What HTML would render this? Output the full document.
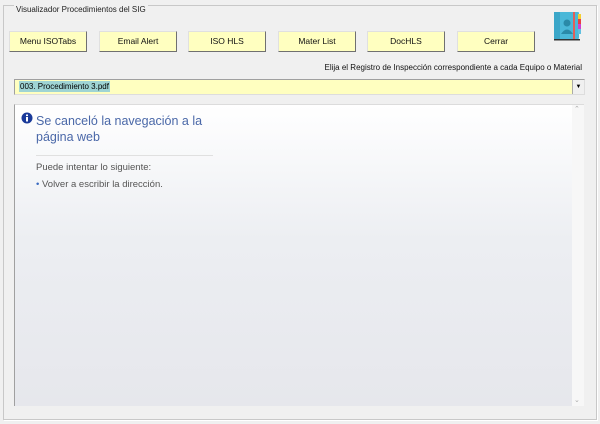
<!DOCTYPE html>
<html><head><style>
body{margin:0;width:600px;height:424px;background:#f0f0f0;font-family:"Liberation Sans",sans-serif;position:relative;overflow:hidden}
.frame{position:absolute;left:3px;top:5px;width:592px;height:413px;border:1px solid #c8c8c8;box-shadow:1px 1px 0 #fff}
.legend{position:absolute;left:10px;top:-1px;font-size:8px;color:#222;background:#f0f0f0;padding:0 2px}
.btn{position:absolute;top:31px;width:76px;height:19px;background:#ffffc0;border:1px solid #e0e0e0;border-right:1px solid #707070;border-bottom:1px solid #707070;font-size:8.5px;text-align:center;line-height:19px;color:#111}
.lbl{position:absolute;right:18px;top:63px;font-size:8px;color:#111}
.combo{position:absolute;left:14px;top:79px;width:569px;height:14px;background:#ffffc0;border:1px solid #a0a0a0;border-bottom-color:#ddd;border-right-color:#ddd}
.combo span{position:absolute;left:4px;top:1px;font-size:8px;background:#9fd4d4;line-height:11px;padding:0 1px}
.arr{position:absolute;right:0;top:0;width:11px;height:14px;background:#f0f0f0;border-left:1px solid #aaa;font-size:6px;text-align:center;line-height:14px}
.web{position:absolute;left:14px;top:104px;width:569px;height:301px;border-left:1px solid #a0a0a0;border-top:1px solid #dcdcdc;background:linear-gradient(#fff,#eceef2 45%,#e6e7ec)}
.sb{position:absolute;right:0;top:0;width:12px;height:301px;background:#f7f7f7}
</style></head><body>
<div class="frame"><div class="legend">Visualizador Procedimientos del SIG</div></div>
<div class="btn" style="left:9px">Menu ISOTabs</div>
<div class="btn" style="left:99px">Email Alert</div>
<div class="btn" style="left:188px">ISO HLS</div>
<div class="btn" style="left:278px">Mater List</div>
<div class="btn" style="left:367px">DocHLS</div>
<div class="btn" style="left:457px">Cerrar</div>
<svg style="position:absolute;left:553px;top:12px" width="30" height="29">
<rect x="1" y="0" width="25" height="27" rx="1" fill="#4bb8d8"/>
<rect x="1" y="0" width="6" height="27" fill="#3aa6c8"/>
<rect x="20" y="0" width="2" height="27" fill="#e0605a"/>
<rect x="25" y="2" width="3" height="5" fill="#f4d030"/><rect x="25" y="7" width="3" height="5" fill="#e84040"/><rect x="25" y="12" width="3" height="5" fill="#d040d0"/><rect x="25" y="17" width="3" height="5" fill="#60c0e0"/>
<circle cx="14" cy="11" r="3.5" fill="#2a8aa8"/><path d="M8 22 Q14 13 20 22Z" fill="#2a8aa8"/>
<rect x="1" y="27" width="26" height="1.5" fill="#333"/>
</svg>
<div class="lbl">Elija el Registro de Inspección correspondiente a cada Equipo o Material</div>
<div class="combo"><span>003. Procedimiento 3.pdf</span><div class="arr">▼</div></div>
<div class="web">
<svg style="position:absolute;left:6px;top:7px" width="12" height="12"><circle cx="6" cy="6" r="5.5" fill="#1a3a9a"/><rect x="5" y="5" width="2" height="4.5" fill="#fff"/><rect x="5" y="2.5" width="2" height="1.6" fill="#fff"/></svg>
<div style="position:absolute;left:21px;top:8px;font-size:12.5px;line-height:16px;color:#4a68a8">Se canceló la navegación a la<br>página web</div>
<div style="position:absolute;left:21px;top:50px;width:177px;border-top:1px solid #e0e0e0"></div>
<div style="position:absolute;left:21px;top:57px;font-size:9.5px;color:#555">Puede intentar lo siguiente:</div>
<div style="position:absolute;left:21px;top:74px;font-size:9.5px;color:#555"><span style="color:#3a6ac0">•</span> Volver a escribir la dirección.</div>
<div class="sb"><div style="position:absolute;left:2px;top:0;font-size:7px;color:#aaa">⌃</div><div style="position:absolute;left:2px;bottom:2px;font-size:7px;color:#aaa">⌄</div></div>
</div>
</body></html>
